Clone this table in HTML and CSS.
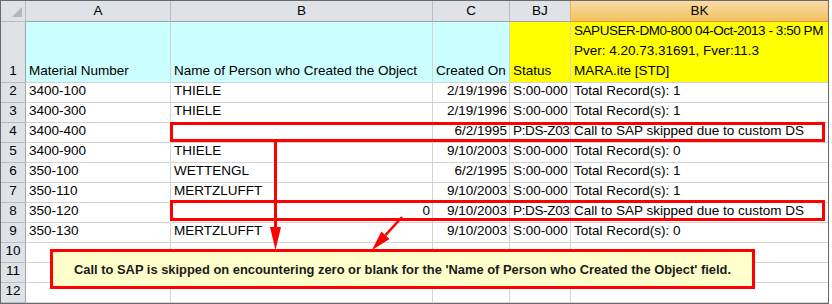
FILE: index.html
```html
<!DOCTYPE html>
<html lang="en">
  <head>
    <meta charset="utf-8" />
    <title>MARA.ite - Sheet</title>
    <link rel="stylesheet" href="styles.css">
  </head>
  <body>
    <div class="sheet">
      <div class="grid">
        <!-- column headers -->
        <div class="hd corner">
          <svg width="25" height="20" viewBox="0 0 25 20"><polygon points="11,16 21,16 21,6" fill="#b5b8bc"/></svg>
        </div>
        <div class="hd col">A</div>
        <div class="hd col">B</div>
        <div class="hd col">C</div>
        <div class="hd col pre-sel">BJ</div>
        <div class="hd col sel last">BK</div>

        <!-- row 1 -->
        <div class="hd rn">1</div>
        <div class="cell cyan">Material Number</div>
        <div class="cell cyan">Name of Person who Created the Object</div>
        <div class="cell cyan">Created On</div>
        <div class="cell yellow">Status</div>
        <div class="cell yellow last">
          <span class="tight">SAPUSER-DM0-800 04-Oct-2013 - 3:50 PM</span>
          <span>Pver: 4.20.73.31691, Fver:11.3</span>
          <span>MARA.ite [STD]</span>
        </div>

        <div class="hd rn">2</div>
        <div class="cell">3400-100</div>
        <div class="cell">THIELE</div>
        <div class="cell num">2/19/1996</div>
        <div class="cell">S:00-000</div>
        <div class="cell last">Total Record(s): 1</div>

        <div class="hd rn">3</div>
        <div class="cell">3400-300</div>
        <div class="cell">THIELE</div>
        <div class="cell num">2/19/1996</div>
        <div class="cell">S:00-000</div>
        <div class="cell last">Total Record(s): 1</div>

        <div class="hd rn">4</div>
        <div class="cell">3400-400</div>
        <div class="cell"></div>
        <div class="cell num">6/2/1995</div>
        <div class="cell snug">P:DS-Z03</div>
        <div class="cell last">Call to SAP skipped due to custom DS</div>

        <div class="hd rn">5</div>
        <div class="cell">3400-900</div>
        <div class="cell">THIELE</div>
        <div class="cell num">9/10/2003</div>
        <div class="cell">S:00-000</div>
        <div class="cell last">Total Record(s): 0</div>

        <div class="hd rn">6</div>
        <div class="cell">350-100</div>
        <div class="cell">WETTENGL</div>
        <div class="cell num">6/2/1995</div>
        <div class="cell">S:00-000</div>
        <div class="cell last">Total Record(s): 1</div>

        <div class="hd rn">7</div>
        <div class="cell">350-110</div>
        <div class="cell">MERTZLUFFT</div>
        <div class="cell num">9/10/2003</div>
        <div class="cell">S:00-000</div>
        <div class="cell last">Total Record(s): 1</div>

        <div class="hd rn">8</div>
        <div class="cell">350-120</div>
        <div class="cell num">0</div>
        <div class="cell num">9/10/2003</div>
        <div class="cell snug">P:DS-Z03</div>
        <div class="cell last">Call to SAP skipped due to custom DS</div>

        <div class="hd rn">9</div>
        <div class="cell">350-130</div>
        <div class="cell">MERTZLUFFT</div>
        <div class="cell num">9/10/2003</div>
        <div class="cell">S:00-000</div>
        <div class="cell last">Total Record(s): 0</div>

        <div class="hd rn">10</div>
        <div class="cell"></div>
        <div class="cell"></div>
        <div class="cell"></div>
        <div class="cell"></div>
        <div class="cell last"></div>

        <div class="hd rn">11</div>
        <div class="cell"></div>
        <div class="cell"></div>
        <div class="cell"></div>
        <div class="cell"></div>
        <div class="cell last"></div>

        <div class="hd rn">12</div>
        <div class="cell"></div>
        <div class="cell"></div>
        <div class="cell"></div>
        <div class="cell"></div>
        <div class="cell last"></div>
      </div>

      <!-- annotations drawn over the sheet -->
      <div class="mark mark-row4"></div>
      <div class="mark mark-row8"></div>

      <svg class="arrows" width="829" height="304" viewBox="0 0 829 304">
        <line x1="275.5" y1="141" x2="275.5" y2="230" stroke="#ff0000" stroke-width="3"/>
        <polygon points="270,227 281,227 275.5,250" fill="#ff0000"/>
        <line x1="402" y1="217" x2="385.5" y2="235.2" stroke="#ff0000" stroke-width="2.5"/>
        <polygon points="389.6,238.9 381.4,231.5 372,250" fill="#ff0000"/>
      </svg>

      <div class="callout">
        Call to SAP is skipped on encountering zero or blank for the 'Name of Person who Created the Object' field.
      </div>
    </div>
  </body>
</html>
```

FILE: styles.css
```css
body {
  margin: 0;
  background: #fff;
  font-family: 'Liberation Sans', Arial, sans-serif;
}

.sheet {
  position: relative;
  width: 827px;
  border: 1px solid #6b6b6b;
}

.grid {
  display: grid;
  grid-template-columns: 25px 145px 262px 77px 61px 257px;
  grid-template-rows: 21px 61px repeat(11, 20px);
}

.grid > div {
  box-sizing: border-box;
  display: flex;
  flex-direction: column;
  justify-content: flex-end;
  border-right: 1px solid #d4d4d4;
  border-bottom: 1px solid #d4d4d4;
  font-size: 13.5px;
  line-height: 20px;
  white-space: nowrap;
  overflow: hidden;
  color: #000;
}

.grid > .last {
  border-right: none;
}

.cell {
  padding: 0 2px 1px 3px;
}

.num {
  text-align: right;
}

.tight {
  letter-spacing: -0.45px;
}

.snug {
  letter-spacing: -0.35px;
}

.cyan {
  background: #ccffff;
}

.yellow {
  background: #ffff00;
}

/* headers */
.hd {
  background: #dfe3e8;
  color: #2f2f2f;
  text-align: center;
}

.grid > .hd {
  border-right-color: #b9bec5;
  border-bottom-color: #b9bec5;
}

.grid > .rn {
  padding-bottom: 1px;
  border-right-color: #9ea5ad;
}

.grid > .col {
  justify-content: center;
  border-bottom-color: #9ea5ad;
}

.grid > .pre-sel {
  border-right-color: #e8b45e;
}

.corner {
  padding: 0;
}

.corner svg {
  display: block;
}

.grid > .sel {
  background: linear-gradient(#f9dca6, #f1c15f);
  border-bottom-color: #f29436;
}

/* annotations */
.mark {
  position: absolute;
  left: 169px;
  width: 655px;
  box-sizing: border-box;
  border: 3px solid #ff0000;
}

.mark-row4 {
  top: 121px;
  height: 20px;
}

.mark-row8 {
  top: 199px;
  height: 21px;
}

.arrows {
  position: absolute;
  left: -1px;
  top: -1px;
  pointer-events: none;
}

.callout {
  position: absolute;
  left: 49px;
  top: 248px;
  width: 705px;
  height: 40px;
  box-sizing: border-box;
  border: 3px solid #ff0000;
  background: #ffffcc;
  display: flex;
  align-items: center;
  justify-content: center;
  font-size: 12.9px;
  font-weight: 700;
  color: #1a1a1a;
  white-space: nowrap;
}
```
